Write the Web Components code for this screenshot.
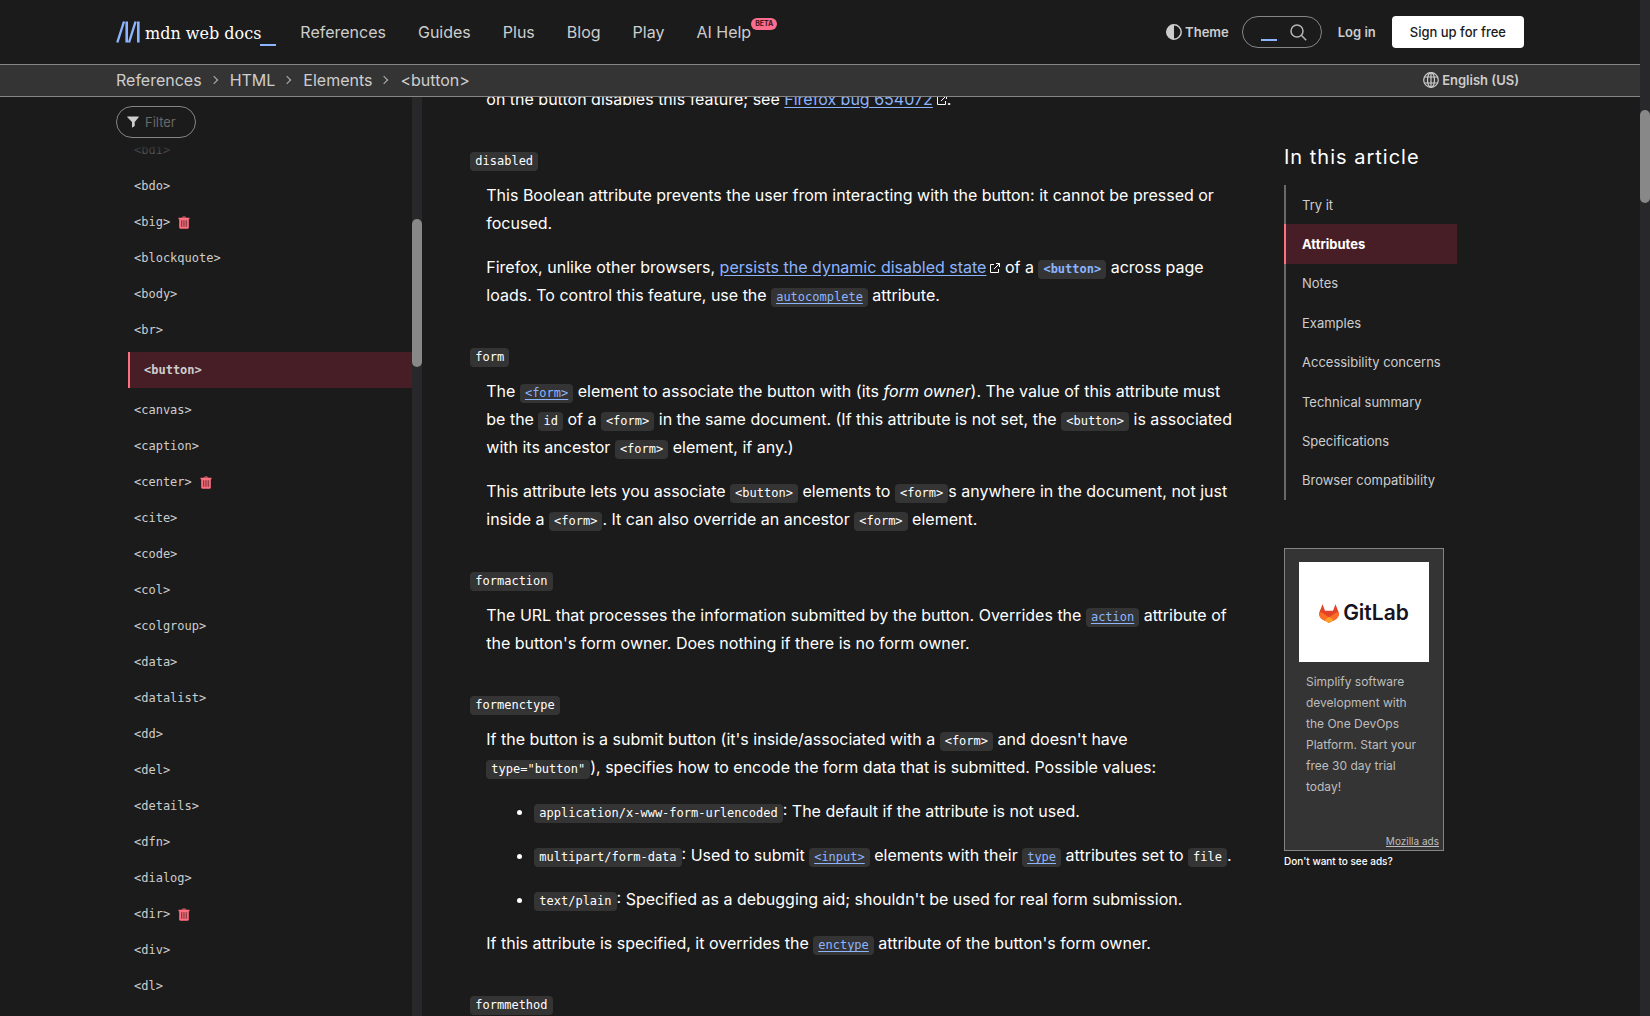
<!DOCTYPE html>
<html lang="en-US">
<head>
<meta charset="utf-8">
<title>&lt;button&gt;: The Button element | MDN</title>
<style>
  :root {
    --bg: #1b1b1b;
    --bg-2: #343434;
    --text: #ffffff;
    --text-2: #cdcdcd;
    --muted: #858585;
    --link: #8cb4ff;
    --red: #ff707f;
    --red-bg: #471e26;
    --sans: Inter, "Liberation Sans", sans-serif;
    --mono: "DejaVu Sans Mono", "Liberation Mono", monospace;
  }
  html, body { margin: 0; height: 100%; }
  body { background: var(--bg); color: var(--text); font: 16px/28px var(--sans); overflow: hidden; }
</style>
</head>
<body>
<mdn-page>
  <mdn-header slot="top"></mdn-header>
  <mdn-breadcrumbs slot="top"></mdn-breadcrumbs>
  <mdn-sidebar slot="start"></mdn-sidebar>
  <mdn-article slot="main"></mdn-article>
  <mdn-toc slot="end"></mdn-toc>
  <mdn-ad slot="end"></mdn-ad>
</mdn-page>

<template id="page">
  <style>
    :host { display: flex; height: 100vh; }
    .view { flex: 1; min-width: 0; display: flex; flex-direction: column; }
    .cols {
      flex: 1; min-height: 0; width: 100%; max-width: 1440px; margin: 0 auto; padding: 0 16px; box-sizing: border-box;
      display: grid; grid-template: minmax(0, 1fr) / minmax(0, 1fr) minmax(0, 2.5fr) 240px; column-gap: 48px;
    }
    aside { padding-top: 46px; display: flex; flex-direction: column; align-items: flex-start; gap: 48px; }
  </style>
  <div class="view">
    <slot name="top"></slot>
    <div class="cols">
      <slot name="start"></slot>
      <slot name="main"></slot>
      <aside><slot name="end"></slot></aside>
    </div>
  </div>
  <mdn-scrollbar style="--before: 110; --thumb: 93; --after: 813"></mdn-scrollbar>
</template>

<template id="scrollbar">
  <style>
    :host { display: flex; flex-direction: column; width: 10px; flex: none; background: #28282a; }
    .a { flex: var(--before) 0 0; }
    .t { flex: var(--thumb) 0 0; background: #888888; border-radius: 5px; }
    .b { flex: var(--after) 0 0; }
  </style>
  <div class="a"></div><div class="t"></div><div class="b"></div>
</template>

<template id="header">
  <style>
    :host { display: block; }
    header { display: flex; align-items: center; height: 64px; max-width: 1440px; margin: 0 auto; padding: 0 16px; box-sizing: border-box; }
    a { color: inherit; text-decoration: none; }
    .logo { display: flex; align-items: center; gap: 5px; font: 16px/24px "DejaVu Serif", "Liberation Serif", serif; color: #fff; margin-right: 24px; }
    .logo span { padding-top: 3px; }
    .bar { width: 16px; height: 2px; background: var(--link); align-self: flex-end; }
    .logo .bar { margin-left: -6px; }
    nav { display: flex; gap: 32px; color: var(--text-2); flex: 1; }
    nav span { position: relative; }
    sup { position: absolute; left: 100%; top: 0; background: #ff6d8e; color: #3b1620; font: 700 7px/12px var(--sans); padding: 0 4px; border-radius: 6px; }
    .right { display: flex; align-items: center; color: var(--text-2); font: 600 13px/20px var(--sans); }
    button { font: inherit; color: inherit; background: none; border: 0; padding: 0; display: flex; align-items: center; gap: 3px; }
    form { display: flex; align-items: center; width: 80px; height: 32px; box-sizing: border-box; border: 1px solid var(--muted); border-radius: 16px; margin: 0 16px 0 13px; padding: 0 14px 0 16px; }
    input { width: 0; flex: 1; min-width: 0; height: 20px; border: 0; padding: 0; background: none; color: var(--text); outline: 0; }
    form .bar { margin-bottom: 6px; }
    .sign { margin-left: 16px; height: 32px; box-sizing: border-box; background: #fff; color: #1b1b1b; border-radius: 4px; padding: 6px 18px; font-weight: 500; }
    form button { margin-left: 13px; }
  </style>
  <header>
    <a class="logo" href="#" aria-label="MDN homepage">
      <svg width="24" height="22" viewBox="0 0 24 22" fill="none" stroke="#8cb4ff" stroke-width="2.4"><path d="M1.3 21.5 8 .5M13 21.5 19.6.5"/><path d="M10.7.5v21M22.3.5v21" stroke-width="2.6"/></svg>
      <span>mdn web docs</span><i class="bar"></i>
    </a>
    <nav>
      <a href="#">References</a><a href="#">Guides</a><a href="#">Plus</a><a href="#">Blog</a><a href="#">Play</a>
      <span><a href="#">AI Help</a><sup>BETA</sup></span>
    </nav>
    <div class="right">
      <button type="button"><svg width="16" height="16" viewBox="0 0 16 16"><circle cx="8" cy="8" r="7.2" fill="none" stroke="#cdcdcd" stroke-width="1.5"/><path d="M8 .5a7.5 7.5 0 0 0 0 15z" fill="#cdcdcd"/></svg>Theme</button>
      <form><input type="search" aria-label="Search MDN"><i class="bar"></i>
        <button type="button" aria-label="Search"><svg width="17" height="17" viewBox="0 0 17 17" fill="none" stroke="#b5b5b5" stroke-width="1.5"><circle cx="7" cy="7" r="6"/><path d="m11.3 11.3 4.9 4.9"/></svg></button></form>
      <a href="#">Log in</a>
      <a class="sign" href="#">Sign up for free</a>
    </div>
  </header>
</template>

<template id="breadcrumbs">
  <style>
    :host { display: block; background: var(--bg-2); border: solid var(--muted); border-width: 1px 0; color: var(--text-2); }
    div { display: flex; align-items: center; justify-content: space-between; height: 31px; max-width: 1440px; margin: 0 auto; padding: 0 16px 1px; box-sizing: border-box; }
    ol { display: flex; align-items: center; list-style: none; margin: 0; padding: 0; }
    li { display: flex; align-items: center; }
    li + li::before { content: ""; width: 5px; height: 5px; border: solid #b3b3b3; border-width: 1px 1px 0 0; transform: rotate(45deg); margin: 0 13px 0 9px; }
    a { color: inherit; text-decoration: none; }
    button { font: 600 13px/20px var(--sans); color: inherit; background: none; border: 0; padding: 0; margin-right: 5px; display: flex; align-items: center; gap: 3px; }
  </style>
  <div>
    <ol><li><a href="#">References</a></li><li><a href="#">HTML</a></li><li><a href="#">Elements</a></li><li><a href="#">&lt;button&gt;</a></li></ol>
    <button type="button"><svg width="16" height="16" viewBox="0 0 16 16" fill="none" stroke="#cdcdcd" stroke-width="1.2"><circle cx="8" cy="8" r="7.3"/><ellipse cx="8" cy="8" rx="3.5" ry="7.3"/><path d="M8 .7v14.6M1.5 5h13M1.5 11h13"/></svg>English (US)</button>
  </div>
</template>

<template id="sidebar">
  <style>
    :host { display: flex; min-height: 0; }
    .pane { flex: 1; min-width: 0; display: flex; flex-direction: column; overflow: hidden; }
    .top { position: relative; z-index: 1; flex: none; background: var(--bg); padding: 9px 0 8px; }
    .top::after { content: ""; position: absolute; left: 0; right: 0; top: 100%; height: 30px; background: linear-gradient(#1b1b1bee, #1b1b1b00); }
    label { display: flex; align-items: center; gap: 6px; width: 80px; height: 32px; box-sizing: border-box; border: 1px solid var(--muted); border-radius: 16px; padding: 0 10px; }
    input { flex: 1; min-width: 0; border: 0; padding: 0; background: none; outline: 0; color: var(--text); font: 13px/20px var(--sans); }
    input::placeholder { color: #696969; opacity: 1; }
    ul { list-style: none; margin: -14px 0 0; padding: 0 0 0 12px; font: 12px/36px var(--mono); color: var(--text-2); }
    a { display: flex; align-items: center; gap: 8px; color: inherit; text-decoration: none; padding-left: 6px; }
    .on { margin: 4px 0; background: var(--red-bg); border-left: 2px solid var(--red); padding-left: 14px; font-weight: 700; }
    svg { display: block; flex: none; }
  </style>
  <div class="pane">
    <div class="top"><label><svg width="12" height="12" viewBox="0 0 12 12" fill="#cdcdcd"><path d="M.3.5h11.4v.7L7.7 6v3.9L5 11.7V6L.3 1.2z"/></svg><input type="text" placeholder="Filter" aria-label="Filter sidebar"></label></div>
    <ul></ul>
  </div>
  <mdn-scrollbar style="--before: 122; --thumb: 148; --after: 649"></mdn-scrollbar>
</template>

<template id="attribute">
  <style>
    :host { display: block; margin-bottom: 32px; }
    dl, dd { margin: 0; }
    dt { margin-bottom: 8px; }
    dd { padding-left: 16px; display: flex; flex-direction: column; gap: 16px; }
    code { font: 12px/14px var(--mono); background: var(--bg-2); border-radius: 4px; padding: 2px 5px 3px; }
  </style>
  <dl><dt><code></code></dt><dd><slot></slot></dd></dl>
</template>

<template id="article">
  <style>
    :host { display: block; min-height: 0; overflow: hidden; }
    article { margin-top: -12px; }
    p { margin: 0; }
    .first { margin: 0 0 32px 16px; }
    a { color: var(--link); text-underline-offset: 2px; }
    code { font: 12px/14px var(--mono); background: var(--bg-2); border-radius: 4px; padding: 2px 5px 3px; }
    .here { color: var(--link); font-weight: 700; }
    ul { margin: 0; padding-left: 48px; display: flex; flex-direction: column; gap: 16px; }
  </style>
  <article>
    <p class="first">on the button disables this feature; see <a href="#">Firefox bug 654072</a><mdn-ext></mdn-ext>.</p>
    <mdn-attribute name="disabled">
      <p>This Boolean attribute prevents the user from interacting with the button: it cannot be pressed or focused.</p>
      <p>Firefox, unlike other browsers, <a href="#">persists the dynamic disabled state</a><mdn-ext></mdn-ext> of a <code class="here">&lt;button&gt;</code> across page loads. To control this feature, use the <a href="#"><code>autocomplete</code></a> attribute.</p>
    </mdn-attribute>
    <mdn-attribute name="form">
      <p>The <a href="#"><code>&lt;form&gt;</code></a> element to associate the button with (its <em>form owner</em>). The value of this attribute must be the <code>id</code> of a <code>&lt;form&gt;</code> in the same document. (If this attribute is not set, the <code>&lt;button&gt;</code> is associated with its ancestor <code>&lt;form&gt;</code> element, if any.)</p>
      <p>This attribute lets you associate <code>&lt;button&gt;</code> elements to <code>&lt;form&gt;</code>s anywhere in the document, not just inside a <code>&lt;form&gt;</code>. It can also override an ancestor <code>&lt;form&gt;</code> element.</p>
    </mdn-attribute>
    <mdn-attribute name="formaction">
      <p>The URL that processes the information submitted by the button. Overrides the <a href="#"><code>action</code></a> attribute of the button's form owner. Does nothing if there is no form owner.</p>
    </mdn-attribute>
    <mdn-attribute name="formenctype">
      <p>If the button is a submit button (it's inside/associated with a <code>&lt;form&gt;</code> and doesn't have <code>type="button"</code>), specifies how to encode the form data that is submitted. Possible values:</p>
      <ul>
        <li><code>application/x-www-form-urlencoded</code>: The default if the attribute is not used.</li>
        <li><code>multipart/form-data</code>: Used to submit <a href="#"><code>&lt;input&gt;</code></a> elements with their <a href="#"><code>type</code></a> attributes set to <code>file</code>.</li>
        <li><code>text/plain</code>: Specified as a debugging aid; shouldn't be used for real form submission.</li>
      </ul>
      <p>If this attribute is specified, it overrides the <a href="#"><code>enctype</code></a> attribute of the button's form owner.</p>
    </mdn-attribute>
    <mdn-attribute name="formmethod"></mdn-attribute>
  </article>
</template>

<template id="ext">
  <style>:host { display: inline-block; width: 10px; height: 10px; margin-left: 4px; line-height: 0; }</style>
  <svg width="10" height="10" viewBox="0 0 10 10" fill="none" stroke="#fff"><path d="M4 1.5H.5v8h8V6M6 .5h3.5V4M9.5.5 4 6"/></svg>
</template>

<template id="toc">
  <style>
    :host { display: block; }
    h2 { margin: 0 0 14px; font: 400 20px/28px var(--sans); letter-spacing: 1px; }
    ul { list-style: none; margin: 0; padding: 0; width: fit-content; height: 315px; display: grid; grid-auto-rows: 1fr; font: 13px/20px var(--sans); color: var(--text-2); }
    li { display: flex; align-items: center; border-left: 2px solid #696969; padding: 0 16px; }
    a { color: inherit; text-decoration: none; }
    .on { background: var(--red-bg); border-color: var(--red); color: #fff; font-weight: 700; }
  </style>
  <h2>In this article</h2>
  <ul>
    <li><a href="#">Try it</a></li><li class="on"><a href="#">Attributes</a></li><li><a href="#">Notes</a></li><li><a href="#">Examples</a></li>
    <li><a href="#">Accessibility concerns</a></li><li><a href="#">Technical summary</a></li><li><a href="#">Specifications</a></li><li><a href="#">Browser compatibility</a></li>
  </ul>
</template>

<template id="ad">
  <style>
    :host { display: block; font: 10px/20px var(--sans); }
    .card { width: 160px; height: 303px; box-sizing: border-box; border: 1px solid var(--muted); background: var(--bg-2); color: #bdbdbd; padding: 13px 4px 0 14px; display: flex; flex-direction: column; }
    .pic { width: 130px; height: 100px; box-sizing: border-box; padding-top: 2px; background: #fff; color: #171321; display: flex; align-items: center; justify-content: center; gap: 4px; font: 600 21px/28px var(--sans); }
    p { margin: 9px 18px 0 7px; font-size: 12px; line-height: 21px; flex: 1; }
    .moz { color: inherit; align-self: flex-end; line-height: 18px; }
    .no { color: #fff; text-decoration: none; font-weight: 500; }
  </style>
  <div class="card">
    <div class="pic"><svg width="20" height="19" viewBox="0 0 20 19"><path d="M3.5.2 6 6.7h8L16.5.2l3 7.8c.9 2.5.2 5-2 6.7L10 19l-7.500-4.300C.4 13-.3 10.500.5 8z" fill="#e24329"/><path d="M19.500 8c-2 .4-4.300 1.500-6 2.900l-3.500 2.600 4.500 3.400 3-2.200c2.200-1.700 2.900-4.200 2-6.700zM.5 8c2 .4 4.300 1.500 6 2.900l3.500 2.600-4.500 3.400-3-2.200C.4 13-.3 10.500.5 8z" fill="#fc6d26"/><path d="m5.500 16.200 4.500-3.400 4.500 3.400L10 19z" fill="#fca326"/></svg><span>GitLab</span></div>
    <p>Simplify software development with the One DevOps Platform. Start your free 30 day trial today!</p>
    <a class="moz" href="#">Mozilla ads</a>
  </div>
  <a class="no" href="#">Don't want to see ads?</a>
</template>

<script>
  const define = (name, setup) => customElements.define('mdn-' + name, class extends HTMLElement {
    constructor() {
      super();
      this.attachShadow({ mode: 'open' }).append(document.getElementById(name).content.cloneNode(true));
    }
    connectedCallback() { if (setup) setup(this, this.shadowRoot); }
  });

  const trash = '<svg width="12" height="13" viewBox="0 0 12 13"><path d="M4 1.8C4 .6 8 .6 8 1.8" fill="none" stroke="#ff707f"/><path d="M.5 1.8h11v1.5h-.7v8.2c0 .8-.4 1.2-1.2 1.2H2.4c-.8 0-1.2-.4-1.2-1.2V3.3H.5z" fill="#ff707f"/><path d="M3.5 4.2v6.6M5.2 4.2v6.6M6.9 4.2v6.6M8.6 4.2v6.6" stroke="#7a3540" stroke-width=".9"/></svg>';
  const tags = 'bdi bdo big blockquote body br button canvas caption center cite code col colgroup data datalist dd del details dfn dialog dir div dl'.split(' ');
  const deprecated = ['big', 'center', 'dir'];

  define('scrollbar');
  define('ext');
  define('header');
  define('breadcrumbs');
  define('sidebar', (el, root) => {
    root.querySelector('ul').innerHTML = tags.map(t =>
      `<li><a href="#"${t === 'button' ? ' class="on" aria-current="page"' : ''}>&lt;${t}&gt;${deprecated.includes(t) ? trash : ''}</a></li>`).join('');
  });
  define('attribute', (el, root) => { root.querySelector('code').textContent = el.getAttribute('name'); });
  define('article');
  define('toc');
  define('ad');
  define('page');
</script>
</body>
</html>
